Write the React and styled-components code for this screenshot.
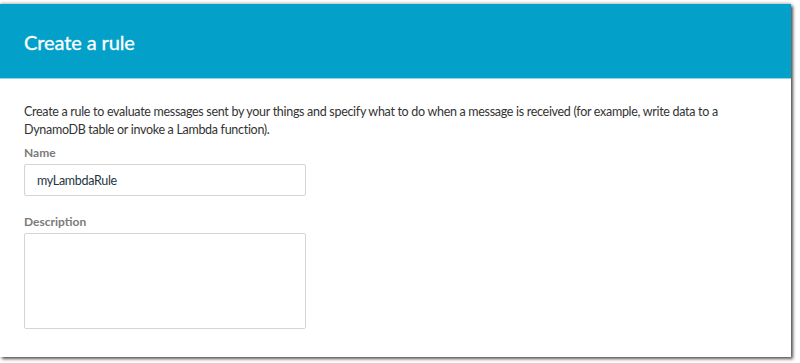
import React from 'react';
import styled, { createGlobalStyle } from 'styled-components';

const GlobalStyle = createGlobalStyle`
  html, body {
    margin: 0;
    padding: 0;
    background: #ffffff;
    font-family: Lato, "Noto Sans", sans-serif;
  }
`;

const Page = styled.div`
  width: 800px;
  height: 363px;
  padding-top: 4px;
  box-sizing: border-box;
  overflow: hidden;
`;

const Panel = styled.div`
  width: 791px;
  height: 353px;
  background: #ffffff;
  box-shadow: 2px 2px 3px rgba(0, 0, 0, 0.65), 0 -1px 3px rgba(0, 0, 0, 0.25);
  display: flex;
  flex-direction: column;
`;

const Header = styled.div`
  height: 75px;
  background: #03a1c9;
  border-bottom: 1px solid #8fd3e6;
  display: flex;
  align-items: center;
  padding: 0 24px;
  box-sizing: border-box;
`;

const Title = styled.h2`
  margin: 0;
  color: #ffffff;
  font-size: 20px;
  font-weight: 400;
  letter-spacing: -0.1px;
  padding-top: 1px;
  -webkit-text-stroke: 0.3px #ffffff;
`;

const Body = styled.div`
  padding: 24px 24px 0 24px;
  display: flex;
  flex-direction: column;
`;

const Intro = styled.p`
  margin: 0 0 6px 0;
  font-size: 12.5px;
  letter-spacing: -0.3px;
  line-height: 18px;
  color: #333333;
`;

const Field = styled.div`
  display: flex;
  flex-direction: column;
  margin-bottom: ${(p) => p.$gap || 0}px;
`;

const Label = styled.label`
  font-size: 12px;
  font-weight: 700;
  color: #7b7b7b;
  line-height: 16px;
  margin-bottom: 3px;
`;

const Input = styled.input`
  width: 282px;
  height: 32px;
  box-sizing: border-box;
  border: 1px solid #d5d5d5;
  border-radius: 2px;
  padding: 0 12px;
  font-family: inherit;
  font-size: 12.5px;
  letter-spacing: -0.3px;
  color: #1d3642;
  outline: none;
`;

const TextArea = styled.textarea`
  width: 282px;
  height: 96px;
  box-sizing: border-box;
  border: 1px solid #d5d5d5;
  border-radius: 2px;
  resize: none;
  font-family: inherit;
  outline: none;
`;

export default function App() {
  return (
    <Page>
      <GlobalStyle />
      <Panel>
        <Header>
          <Title>Create a rule</Title>
        </Header>
        <Body>
          <Intro>
            Create a rule to evaluate messages sent by your things and specify what to do when a message is received (for example, write data to a DynamoDB table or invoke a Lambda function).
          </Intro>
          <Field $gap={18}>
            <Label>Name</Label>
            <Input defaultValue="myLambdaRule" />
          </Field>
          <Field>
            <Label>Description</Label>
            <TextArea />
          </Field>
        </Body>
      </Panel>
    </Page>
  );
}
